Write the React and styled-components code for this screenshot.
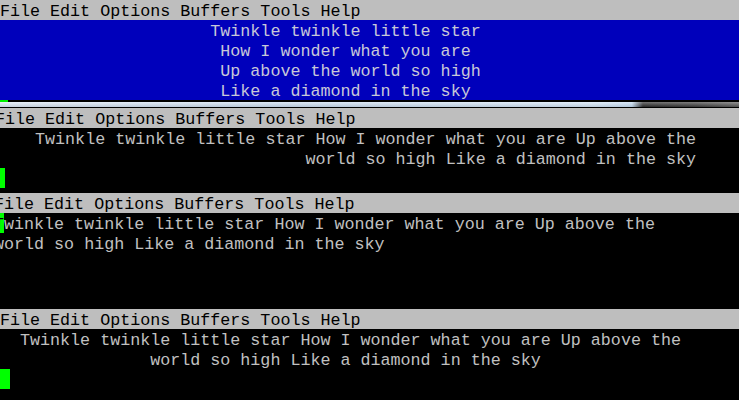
import styled, { createGlobalStyle } from 'styled-components';

const GlobalStyle = createGlobalStyle`
	html, body {
		margin: 0;
		padding: 0;
		background: #000;
		overflow: hidden;
	}
	#root {
		width: 739px;
		height: 400px;
		overflow: hidden;
	}
`;

const MENU = 'File Edit Options Buffers Tools Help';

const WIDTH = 70;

function center(text) {
	return ' '.repeat(Math.floor((WIDTH - text.length) / 2)) + text;
}

function right(text) {
	return ' '.repeat(WIDTH - text.length) + text;
}

const poem = [
	'Twinkle twinkle little star',
	'How I wonder what you are',
	'Up above the world so high',
	'Like a diamond in the sky',
];

const line1 = 'Twinkle twinkle little star How I wonder what you are Up above the';
const line2 = 'world so high Like a diamond in the sky';

export default function App() {
	return (
		<Page>
			<GlobalStyle />

			<Screen>
				<MenuBar>{MENU}</MenuBar>
				<Blue>
					{poem.map((text, i) => (
						<Row key={i}>{center(text)}</Row>
					))}
				</Blue>
				<Edge>
					<Tick />
					<Strip />
				</Edge>
			</Screen>

			<Screen $shift={5} $tail={5}>
				<MenuBar>{MENU}</MenuBar>
				<Row>{right(line1)}</Row>
				<Row>{right(line2)}</Row>
				<Row><Cursor /></Row>
			</Screen>

			<Screen $shift={6} $tail={56}>
				<MenuBar>{MENU}</MenuBar>
				<Row><Cursor>T</Cursor>{line1.slice(1)}</Row>
				<Row>{line2}</Row>
			</Screen>

			<Screen>
				<MenuBar>{MENU}</MenuBar>
				<Row>{center(line1)}</Row>
				<Row>{center(line2)}</Row>
				<Row><Cursor /></Row>
			</Screen>
		</Page>
	);
}

const Page = styled.div`
	width: 739px;
	height: 400px;
	overflow: hidden;
	background: #000;
	font-family: "Liberation Mono", "Courier New", monospace;
	font-size: 16.7px;
	color: #c0c0c0;
`;

const Screen = styled.section`
	margin-left: ${p => -(p.$shift || 0)}px;
	padding-bottom: ${p => p.$tail || 0}px;
	display: flex;
	flex-direction: column;
`;

const Row = styled.div`
	height: 20px;
	line-height: 20px;
	padding-top: 2px;
	box-sizing: border-box;
	white-space: pre;
	display: flex;
	align-items: flex-start;
`;

const MenuBar = styled(Row)`
	background: #bebebe;
	color: #000;
	width: 760px;
`;

const Blue = styled.div`
	background: #0000bb;
	color: #c8c8d8;
	width: 739px;
`;

const Cursor = styled.span`
	display: inline-block;
	width: 10px;
	height: 20px;
	margin-top: -2px;
	line-height: 20px;
	padding-top: 2px;
	box-sizing: border-box;
	background: #00ff00;
	color: #000;
`;

const Edge = styled.div`
	height: 8px;
	background: #000;
	display: flex;
	flex-direction: column;
`;

const Tick = styled.div`
	width: 8px;
	height: 2px;
	background: #00ee00;
`;

const Strip = styled.div`
	height: 5px;
	background:
		linear-gradient(to bottom, rgba(255, 255, 255, 0.35), rgba(0, 0, 0, 0.1)),
		linear-gradient(to right, #dce8f6 0%, #cadcf0 40%, #d4e6f8 80%, #c4dcf4 85.5%, #2a2a2a 87%, #3a3a3a 94%, #5a5a5a 100%);
`;
